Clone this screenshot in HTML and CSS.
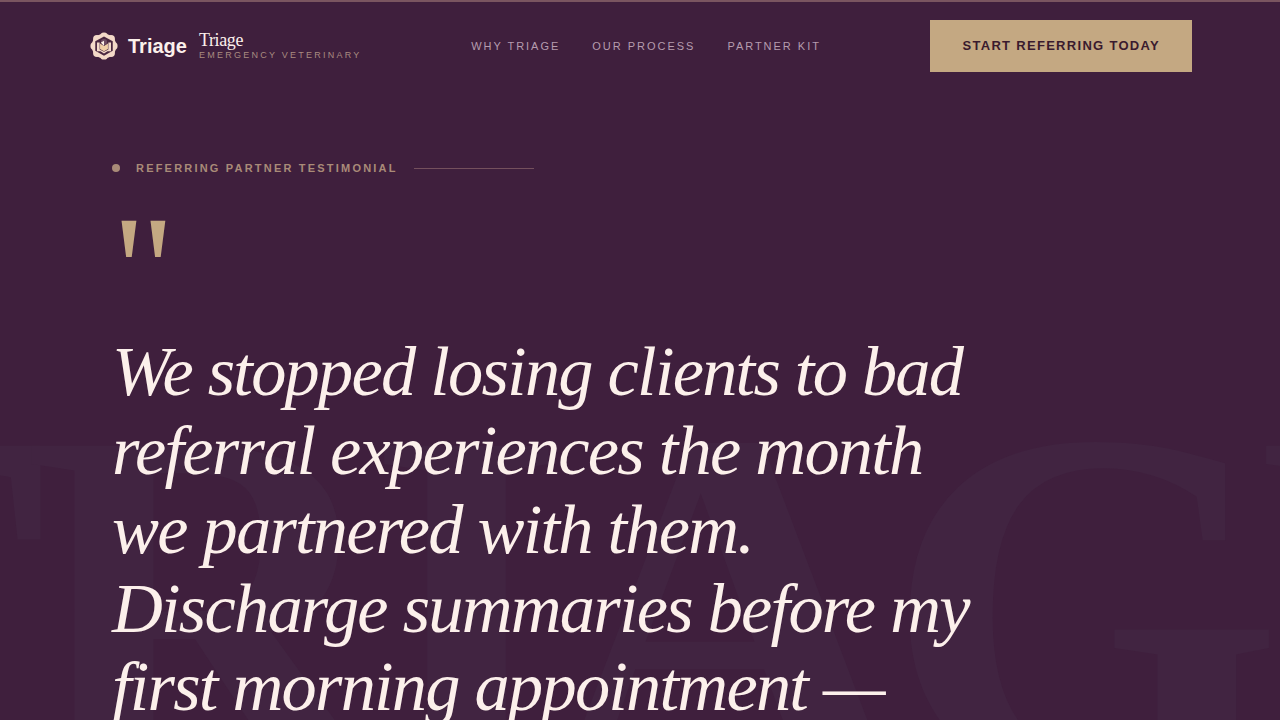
FILE: index.html
```
<!DOCTYPE html>
<html lang="en">
<head>
    <meta charset="UTF-8">
    <meta name="viewport" content="width=device-width, initial-scale=1.0">
    <title>Triage Emergency Veterinary</title>
    <link rel="stylesheet" href="styles.css">
</head>
<body>

<header class="site-header">
    <a class="brand" href="#">
        <span class="brand-logo">
            <svg class="brand-icon" viewBox="0 0 32 32" aria-hidden="true">
                <g fill="#f3d9c8">
                    <circle cx="16" cy="16" r="14"/>
                    <circle cx="16" cy="5" r="4.500"/>
                    <circle cx="24" cy="8" r="4.500"/>
                    <circle cx="27" cy="16" r="4.500"/>
                    <circle cx="24" cy="24" r="4.500"/>
                    <circle cx="16" cy="27" r="4.500"/>
                    <circle cx="8" cy="24" r="4.500"/>
                    <circle cx="5" cy="16" r="4.500"/>
                    <circle cx="8" cy="8" r="4.500"/>
                </g>
                <path fill="#4a2740" d="M16 5l10 5.500v11L16 27 6 21.500v-11z"/>
                <path fill="#f3d9c8" d="M8 12h3v8l5 2.500 5-2.500v-8h3v10h-4l-4 2.500L12 22H8z"/>
                <path fill="#f0cfa6" d="M11.500 13l4.500 3 4.500-3v6.500L16 22l-4.500-2.500z"/>
                <circle cx="16" cy="11.500" r="3.500" fill="#6f4d63"/>
                <path fill="#fff3e8" d="M12.500 12l3.500-2v6z"/>
            </svg>
            <span class="brand-name">Triage</span>
        </span>
        <span class="brand-text">
            <span class="brand-title">Triage</span>
            <span class="brand-sub">Emergency Veterinary</span>
        </span>
    </a>
    <nav class="nav">
        <a href="#why">Why Triage</a>
        <a href="#process">Our Process</a>
        <a href="#kit">Partner Kit</a>
    </nav>
    <a class="cta" href="#start">Start Referring Today</a>
</header>

<main class="hero">
    <div class="watermark" aria-hidden="true">TRIAGE</div>
    <div class="eyebrow">
        <span class="dot"></span>
        <span>Referring Partner Testimonial</span>
        <span class="rule"></span>
    </div>
    <div class="quote-mark" aria-hidden="true">"</div>
    <blockquote class="quote">We stopped losing clients to bad referral experiences the month we partnered with them. Discharge summaries before my first morning appointment —</blockquote>
</main>

</body>
</html>
```
FILE: styles.css
```
* {
    margin: 0;
    padding: 0;
    box-sizing: border-box;
}

body {
    min-height: 100vh;
    background: #3f1f3d;
    border-top: 2px solid #7a5560;
    color: #fcf0eb;
    font-family: "Liberation Sans", Arial, sans-serif;
}

a {
    color: inherit;
    text-decoration: none;
}

/* Header */
.site-header {
    position: relative;
    z-index: 1;
    display: flex;
    align-items: center;
    justify-content: space-between;
    padding: 18px 88px;
}

.brand,
.brand-logo {
    display: flex;
    align-items: center;
}

.brand {
    gap: 12px;
}

.brand-logo {
    gap: 8px;
}

.brand-icon {
    width: 32px;
    height: 32px;
    padding: 2px;
}

.brand-name {
    font-size: 20px;
    font-weight: bold;
}

.brand-text {
    display: flex;
    flex-direction: column;
}

.brand-title {
    font-family: "Liberation Serif", "Times New Roman", serif;
    font-size: 18px;
    line-height: 18px;
    letter-spacing: -0.02em;
}

.brand-sub {
    color: #a98b80;
    font-size: 9px;
    line-height: 12px;
    letter-spacing: 0.25em;
    text-transform: uppercase;
}

.nav {
    display: flex;
    gap: 32px;
    color: #b59cae;
    font-size: 11px;
    letter-spacing: 0.18em;
    text-transform: uppercase;
}

.cta {
    padding: 16px 32px;
    background: #c4a882;
    color: #3a1a2e;
    font-size: 13px;
    font-weight: bold;
    line-height: 20px;
    letter-spacing: 0.1em;
    text-transform: uppercase;
}

/* Testimonial */
.hero {
    position: relative;
    padding: 70px 112px 88px;
    overflow: hidden;
}

.watermark {
    position: absolute;
    top: 263px;
    left: 50%;
    transform: translateX(-50%);
    color: #412441;
    font-family: "Liberation Serif", "Times New Roman", serif;
    font-size: 40vw;
    font-weight: bold;
    line-height: 1;
    letter-spacing: -0.05em;
    white-space: nowrap;
}

.eyebrow {
    position: relative;
    display: flex;
    align-items: center;
    gap: 16px;
    color: #a98b78;
    font-size: 11px;
    font-weight: bold;
    line-height: 16px;
    letter-spacing: 0.2em;
    text-transform: uppercase;
}

.dot {
    width: 8px;
    height: 8px;
    border-radius: 50%;
    background: #a98b78;
}

.rule {
    width: 120px;
    height: 1px;
    background: #74505d;
}

.quote-mark {
    position: relative;
    margin-top: 32px;
    color: #c4a882;
    font-family: "Liberation Serif", "Times New Roman", serif;
    font-size: 154px;
    line-height: 124px;
}

.quote {
    position: relative;
    max-width: 900px;
    font-family: "Liberation Serif", "Times New Roman", serif;
    font-size: clamp(40px, 5.5vw, 88px);
    font-style: italic;
    line-height: 1.12;
    letter-spacing: -0.025em;
}
```
